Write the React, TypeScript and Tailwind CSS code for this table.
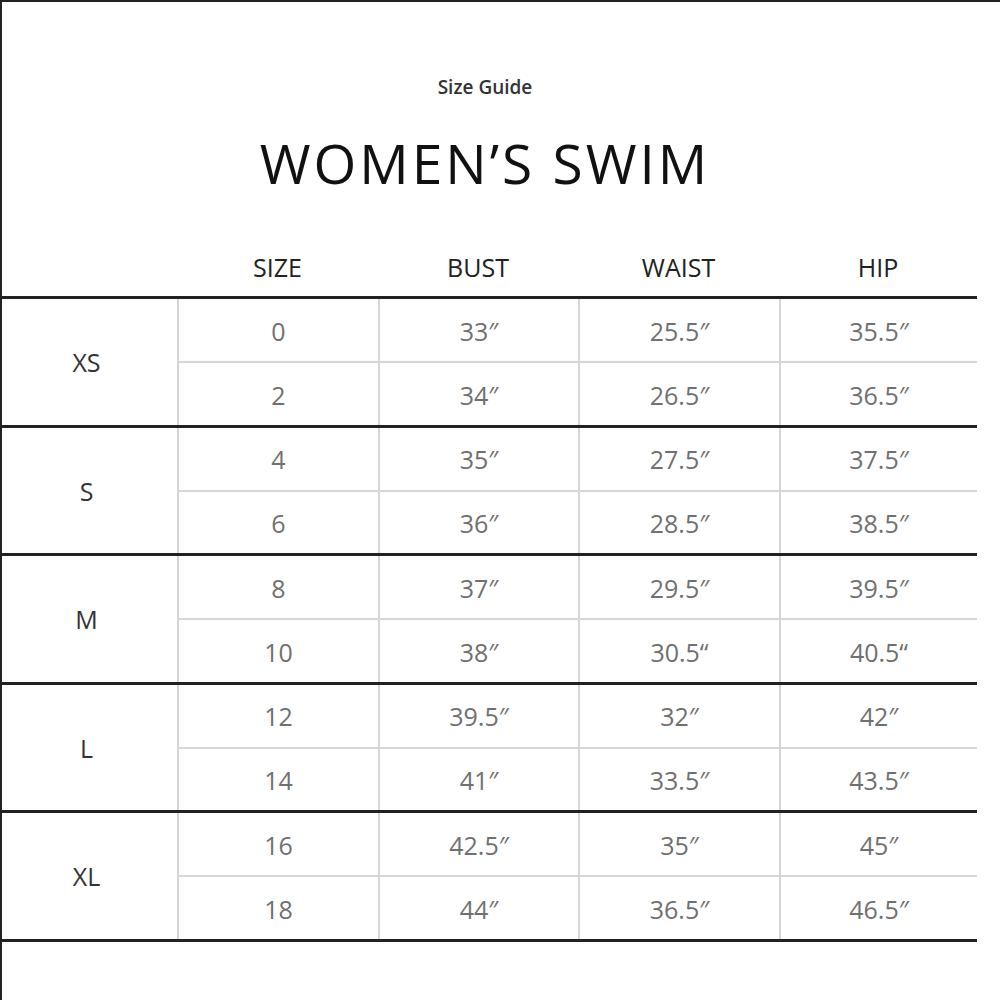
const groups = [
  {
    label: 'XS',
    rows: [
      ['0', '33″', '25.5″', '35.5″'],
      ['2', '34″', '26.5″', '36.5″'],
    ],
  },
  {
    label: 'S',
    rows: [
      ['4', '35″', '27.5″', '37.5″'],
      ['6', '36″', '28.5″', '38.5″'],
    ],
  },
  {
    label: 'M',
    rows: [
      ['8', '37″', '29.5″', '39.5″'],
      ['10', '38″', '30.5“', '40.5“'],
    ],
  },
  {
    label: 'L',
    rows: [
      ['12', '39.5″', '32″', '42″'],
      ['14', '41″', '33.5″', '43.5″'],
    ],
  },
  {
    label: 'XL',
    rows: [
      ['16', '42.5″', '35″', '45″'],
      ['18', '44″', '36.5″', '46.5″'],
    ],
  },
];

const cols = 'grid grid-cols-[201px_200px_201px_198px]';

const App = () => {
  return (
    <div className="w-[1000px] h-[1000px] bg-white border-t-2 border-l-2 border-[#222] font-['Open_Sans','Noto_Sans',sans-serif]">
      <div className="w-[975px] pt-[73px]">
        <div className="w-[966px] text-center text-[19px] leading-[24px] font-semibold text-[#333]">Size Guide</div>
        <h1 className="w-[966px] mt-[32px] text-center text-[55px] leading-[64px] tracking-[3px] text-[#111]">
          WOMEN’S SWIM
        </h1>

        <div className="mt-[45px] flex h-[56px] items-center text-[25px] font-medium text-[#222]">
          <div className="w-[175px]" />
          <div className={cols}>
            <div className="text-center">SIZE</div>
            <div className="text-center">BUST</div>
            <div className="text-center">WAIST</div>
            <div className="text-center">HIP</div>
          </div>
        </div>

        <div className="border-t-[3px] border-[#222]">
          {groups.map((g) => (
            <div key={g.label} className="flex border-b-[3px] border-[#222]">
              <div className="w-[175px] pr-[6px] pt-[2px] flex items-center justify-center text-[25px] font-medium text-[#333]">
                {g.label}
              </div>
              <div className="flex flex-col">
                {g.rows.map((r, i) => (
                  <div
                    key={i}
                    className={`${cols} ${i === 0 ? 'h-[64px] border-b-2 border-[#d6d6d6]' : 'h-[61.5px]'}`}
                  >
                    {r.map((v, j) => (
                      <div
                        key={j}
                        className="flex items-center justify-center pt-[3px] border-l-2 border-[#d6d6d6] text-[25px] font-medium text-[#707070]"
                      >
                        {v}
                      </div>
                    ))}
                  </div>
                ))}
              </div>
            </div>
          ))}
        </div>
      </div>
    </div>
  );
};

export default App;
